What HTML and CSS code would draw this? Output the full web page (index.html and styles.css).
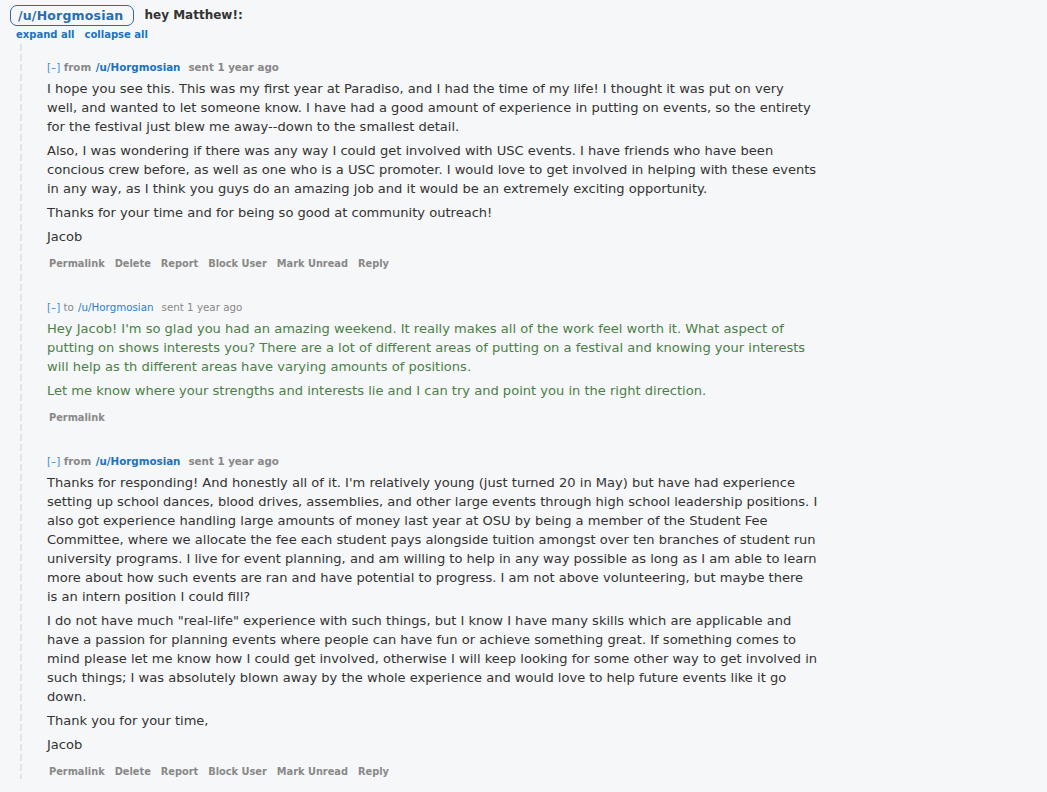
FILE: index.html
```html
<!DOCTYPE html>
<html>
<head>
<meta charset="utf-8">
<link rel="stylesheet" href="styles.css">
</head>
<body>
<div class="page">
  <div class="subject-row">
    <a class="pill">/u/Horgmosian</a>
    <span class="subject">hey Matthew!:</span>
  </div>
  <div class="toggles"><a>expand all</a><a>collapse all</a></div>
  <div class="thread">
    <div class="message">
      <div class="tagline"><a class="expand">[–]</a> from <a class="author">/u/Horgmosian</a><span class="time">sent 1 year ago</span></div>
      <div class="md">
        <p>I hope you see this. This was my first year at Paradiso, and I had the time of my life! I thought it was put on very well, and wanted to let someone know. I have had a good amount of experience in putting on events, so the entirety for the festival just blew me away--down to the smallest detail.</p>
        <p>Also, I was wondering if there was any way I could get involved with USC events. I have friends who have been concious crew before, as well as one who is a USC promoter. I would love to get involved in helping with these events in any way, as I think you guys do an amazing job and it would be an extremely exciting opportunity.</p>
        <p>Thanks for your time and for being so good at community outreach!</p>
        <p>Jacob</p>
      </div>
      <ul class="buttons"><li>Permalink</li><li>Delete</li><li>Report</li><li>Block User</li><li>Mark Unread</li><li>Reply</li></ul>
    </div>
    <div class="message sent">
      <div class="tagline"><a class="expand">[–]</a> to <a class="author">/u/Horgmosian</a><span class="time">sent 1 year ago</span></div>
      <div class="md">
        <p>Hey Jacob! I'm so glad you had an amazing weekend. It really makes all of the work feel worth it. What aspect of putting on shows interests you? There are a lot of different areas of putting on a festival and knowing your interests will help as th different areas have varying amounts of positions.</p>
        <p>Let me know where your strengths and interests lie and I can try and point you in the right direction.</p>
      </div>
      <ul class="buttons"><li>Permalink</li></ul>
    </div>
    <div class="message">
      <div class="tagline"><a class="expand">[–]</a> from <a class="author">/u/Horgmosian</a><span class="time">sent 1 year ago</span></div>
      <div class="md">
        <p>Thanks for responding! And honestly all of it. I'm relatively young (just turned 20 in May) but have had experience setting up school dances, blood drives, assemblies, and other large events through high school leadership positions. I also got experience handling large amounts of money last year at OSU by being a member of the Student Fee Committee, where we allocate the fee each student pays alongside tuition amongst over ten branches of student run university programs. I live for event planning, and am willing to help in any way possible as long as I am able to learn more about how such events are ran and have potential to progress. I am not above volunteering, but maybe there is an intern position I could fill?</p>
        <p>I do not have much "real-life" experience with such things, but I know I have many skills which are applicable and have a passion for planning events where people can have fun or achieve something great. If something comes to mind please let me know how I could get involved, otherwise I will keep looking for some other way to get involved in such things; I was absolutely blown away by the whole experience and would love to help future events like it go down.</p>
        <p>Thank you for your time,</p>
        <p>Jacob</p>
      </div>
      <ul class="buttons"><li>Permalink</li><li>Delete</li><li>Report</li><li>Block User</li><li>Mark Unread</li><li>Reply</li></ul>
    </div>
  </div>
</div>
</body>
</html>
```

FILE: styles.css
```css
html, body {
  margin: 0;
  padding: 0;
  background: #f6f7f8;
}
body {
  font-family: "DejaVu Sans", Verdana, sans-serif;
  color: #222;
}
a { text-decoration: none; cursor: pointer; }
.page {
  padding: 4px 10px 0 10px;
}
.subject-row {
  display: flex;
  align-items: center;
  gap: 10px;
  height: 22px;
}
.pill {
  display: inline-block;
  border: 1px solid #336699;
  border-radius: 7px;
  padding: 0 10px 0 7px;
  font-size: 12.5px;
  font-weight: bold;
  color: #2a6dad;
  line-height: 19px;
  letter-spacing: 0.2px;
}
.subject {
  font-size: 12px;
  font-weight: bold;
  color: #333;
}
.toggles {
  margin: 2px 0 0 6px;
  font-size: 10px;
  font-weight: bold;
  display: flex;
  gap: 10px;
  line-height: 14px;
}
.toggles a { color: #1a73c0; }
.thread {
  margin: 2px 0 0 10px;
  background: linear-gradient(to bottom, #e4e4e4 70%, transparent 70%) left top / 2px 10px repeat-y;
  padding-left: 27px;
  padding-top: 16px;
}
.message {
  margin-bottom: 29px;
}
.tagline {
  font-size: 10.3px;
  font-weight: bold;
  color: #888;
  line-height: 14px;
}
.tagline .expand {
  color: #3a8ad4;
  font-weight: normal;
}
.tagline .author {
  color: #1a73c0;
  margin-left: 1px;
}
.tagline .time {
  margin-left: 8px;
}
.sent .tagline { font-weight: normal; }
.sent .tagline .author { color: #2a7ed1; }
.md {
  margin-top: 5px;
  max-width: 770.5px;
  font-size: 13.05px;
  line-height: 19px;
  color: #333;
}
.sent .md { color: #4b8048; }
.md p {
  margin: 0 0 5px 0;
}
.buttons {
  list-style: none;
  margin: 11px 0 0 2px;
  padding: 0;
  display: flex;
  gap: 10px;
  font-size: 9.8px;
  font-weight: bold;
  color: #888;
  line-height: 14px;
}
```
